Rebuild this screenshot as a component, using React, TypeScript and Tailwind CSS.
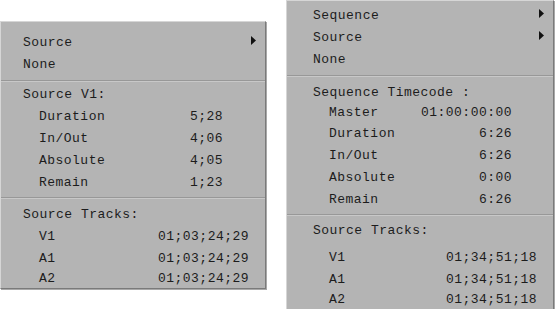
import React from 'react';

type Row = { label: string; value?: string; arrow?: boolean };

const font = { fontFamily: '"Liberation Mono", "Courier New", monospace' };

const Arrow: React.FC = () => (
  <svg width="5" height="9" viewBox="0 0 5 9" className="absolute right-[9px] top-[4px]">
    <polygon points="0,0 5,4.5 0,9" fill="#111" />
  </svg>
);

const TopRow: React.FC<{ row: Row; h?: string }> = ({ row, h = 'h-[22px]' }) => (
  <div className={`relative flex items-center ${h} pl-[22px]`}>
    <span>{row.label}</span>
    {row.arrow && <Arrow />}
  </div>
);

const ValueRow: React.FC<{ row: Row; pr: string; h?: string }> = ({ row, pr, h = 'h-[22px]' }) => (
  <div className={`flex items-center justify-between ${h} pl-[38px] ${pr}`}>
    <span>{row.label}</span>
    <span>{row.value}</span>
  </div>
);

const Separator: React.FC<{ className?: string }> = ({ className = '' }) => (
  <div className={`border-t border-t-[#989898] border-b border-b-[#c8c8c8] ${className}`} />
);

const panel =
  'bg-[#b4b4b4] text-[13px] tracking-[0.47px] text-[#1c1c1c] border-t border-l border-[#d6d6d6] border-r border-r-[#7a7a7a] border-b border-b-[#7a7a7a] shadow-[1px_1px_0_#a8a8a8]';

export default function App() {
  return (
    <div className="w-[556px] h-[309px] bg-white flex items-start gap-[20px] overflow-hidden" style={font}>
      <div className={`${panel} w-[266px] h-[268px] mt-[21px] pt-[10px]`}>
        <TopRow row={{ label: 'Source', arrow: true }} />
        <TopRow row={{ label: 'None' }} />
        <Separator className="mt-[4px] mb-[2px]" />
        <TopRow row={{ label: 'Source V1:' }} />
        <ValueRow row={{ label: 'Duration', value: '5;28' }} pr="pr-[42px]" />
        <ValueRow row={{ label: 'In/Out', value: '4;06' }} pr="pr-[42px]" />
        <ValueRow row={{ label: 'Absolute', value: '4;05' }} pr="pr-[42px]" />
        <ValueRow row={{ label: 'Remain', value: '1;23' }} pr="pr-[42px]" />
        <Separator className="mt-[3px] mb-[5px]" />
        <TopRow row={{ label: 'Source Tracks:' }} />
        <ValueRow row={{ label: 'V1', value: '01;03;24;29' }} pr="pr-[16px]" />
        <ValueRow row={{ label: 'A1', value: '01;03;24;29' }} pr="pr-[16px]" h="h-[21px]" />
        <ValueRow row={{ label: 'A2', value: '01;03;24;29' }} pr="pr-[16px]" h="h-[20px]" />
      </div>

      <div className={`${panel} w-[268px] h-[320px] pt-[4px]`}>
        <div className="pl-[4px]">
          <TopRow row={{ label: 'Sequence', arrow: true }} />
          <TopRow row={{ label: 'Source', arrow: true }} />
          <TopRow row={{ label: 'None' }} />
        </div>
        <Separator className="mt-[4px] mb-[6px]" />
        <div className="pl-[4px]">
          <TopRow row={{ label: 'Sequence Timecode :' }} h="h-[19px]" />
          <ValueRow row={{ label: 'Master', value: '01:00:00:00' }} pr="pr-[41px]" h="h-[21px]" />
          <ValueRow row={{ label: 'Duration', value: '6:26' }} pr="pr-[41px]" />
          <ValueRow row={{ label: 'In/Out', value: '6:26' }} pr="pr-[41px]" />
          <ValueRow row={{ label: 'Absolute', value: '0:00' }} pr="pr-[41px]" />
          <ValueRow row={{ label: 'Remain', value: '6:26' }} pr="pr-[41px]" />
        </div>
        <Separator className="mt-[3px] mb-[4px]" />
        <div className="pl-[4px]">
          <TopRow row={{ label: 'Source Tracks:' }} h="h-[22px]" />
          <div className="h-[5px]" />
          <ValueRow row={{ label: 'V1', value: '01;34;51;18' }} pr="pr-[16px]" />
          <ValueRow row={{ label: 'A1', value: '01;34;51;18' }} pr="pr-[16px]" h="h-[21px]" />
          <ValueRow row={{ label: 'A2', value: '01;34;51;18' }} pr="pr-[16px]" h="h-[20px]" />
        </div>
      </div>
    </div>
  );
}
